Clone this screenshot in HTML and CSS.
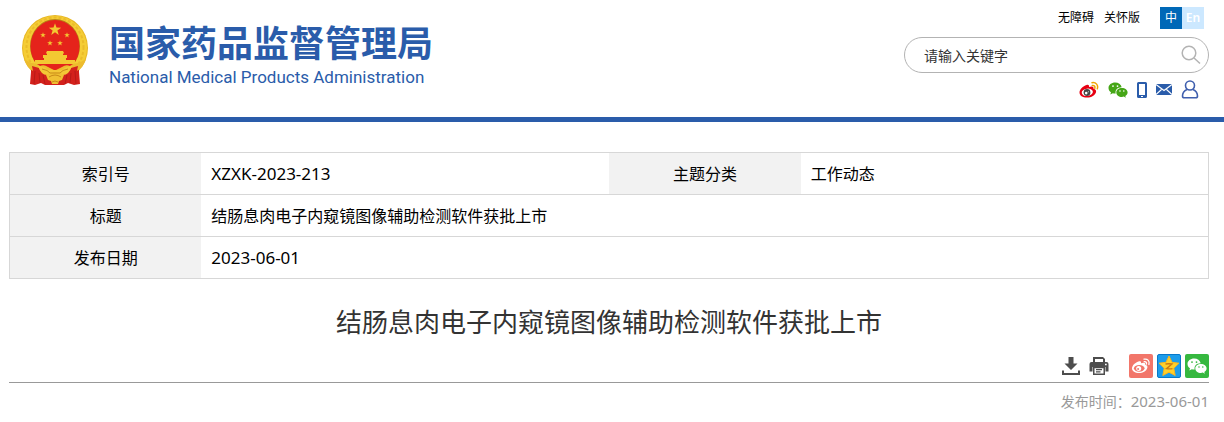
FILE: index.html
```html
<!DOCTYPE html>
<html lang="zh-CN">
<head>
    <meta charset="UTF-8">
    <meta name="viewport" content="width=device-width, initial-scale=1.0">
    <title>结肠息肉电子内窥镜图像辅助检测软件获批上市</title>
    <link rel="stylesheet" href="styles.css">
</head>
<body>
    <!-- 公用图形 -->
    <svg class="defs" aria-hidden="true">
        <symbol id="star" viewBox="0 0 20 20">
            <path d="M10 0.5l2.3 6.6 7.2.1-5.8 4.3 2.1 7-5.8-4.2-5.8 4.2 2.1-7L.5 7.2l7.2-.1z"/>
        </symbol>
        <symbol id="wechat" viewBox="0 0 20 16">
            <path fill-rule="evenodd" d="M7.200.5C3.400.5.5 2.900.5 6c0 1.800 1 3.300 2.500 4.300l-.7 2.200 2.500-1.300c.7.2 1.500.3 2.400.3h.5c-.9-3.600 2-6.400 6-6.300C13 2.400 10.400.5 7.200.5zM5 3.200a.9.9 0 110 1.800.9.9 0 010-1.800zm4.500 0a.9.9 0 110 1.800.9.9 0 010-1.800z"/>
            <path fill-rule="evenodd" d="M13.900 5.900c-3.200 0-5.600 2-5.600 4.500s2.400 4.500 5.600 4.500c.7 0 1.300-.1 1.900-.3l2 1.100-.5-1.800c1.400-.9 2.300-2.100 2.300-3.500 0-2.500-2.500-4.500-5.700-4.500zM12 8.200a.8.8 0 110 1.600.8.8 0 010-1.600zm3.800 0a.8.8 0 110 1.600.8.8 0 010-1.600z"/>
        </symbol>
    </svg>

    <header class="header">
        <div class="brand">
            <svg class="emblem" viewBox="0 0 66 71" aria-hidden="true">
                <circle cx="33" cy="33" r="33" fill="#e8b724"/>
                <circle cx="33" cy="33" r="32" fill="#f5cd36"/>
                <ellipse cx="33" cy="32" rx="28.500" ry="29.500" fill="none" stroke="#ebbc2a" stroke-width="2" stroke-dasharray="3 2"/>
                <ellipse cx="33" cy="31" rx="25" ry="27" fill="#b98316"/>
                <ellipse cx="33" cy="31.500" rx="24.500" ry="26.500" fill="#e5231b"/>
                <g fill="#f3c832">
                    <use href="#star" x="26.500" y="8" width="13" height="13"/>
                    <use href="#star" x="18" y="17" width="6" height="6"/>
                    <use href="#star" x="42" y="17" width="6" height="6"/>
                    <use href="#star" x="25" y="25" width="6" height="6"/>
                    <use href="#star" x="35" y="25" width="6" height="6"/>
                    <path d="M25 36h16l1 2-1 1v1h4v3h-1v2h9v4H13v-4h9v-2h-1v-3h4v-1l-1-1z"/>
                </g>
                <path d="M9 49l8 3q6 2 9 5h14q3-3 9-5l8-3v8l1 12-6 1-6-2-4 2H23l-4-2-6 2-5-1 1-12z" fill="#d3211c"/>
                <path d="M13 56l-1 13M17 58l1 10M21 60l2 9M53 56l1 13M49 58l-1 10M45 60l-2 9" stroke="#b81a17" fill="none"/>
                <path d="M2 44q3 9 9 12l-1-5 7 2 5 5q4 3 7-1h8q3 4 7 1l5-5 7-2-1 5q6-3 9-12l-7 4q-6 0-9 3-4-2-8 1l-6 3h-2l-6-3q-4-3-8-1-3-3-9-3z" fill="#edbc2e"/>
                <path d="M16 51q6 0 10 4h14q4-4 10-4-3 9-9 9l-4 1-4-2-4 2-4-1q-6 0-9-9z" fill="#f3c736"/>
                <path d="M24 60q9-6 18 0l-2 5-3 1-1 3h-6l-1-3-3-1z" fill="#f0c033"/>
                <path d="M20 54q6 1 8 4h10q2-3 8-4M27 62q6-4 12 0M30 67q3-2 6 0" fill="none" stroke="#c98b18"/>
            </svg>
            <div class="brand-text">
                <div class="brand-cn">国家药品监督管理局</div>
                <div class="brand-en">National Medical Products Administration</div>
            </div>
        </div>

        <div class="tools">
            <nav class="top-links">
                <a href="#">无障碍</a>
                <a href="#">关怀版</a>
                <div class="lang">
                    <a class="lang-item active" href="#">中</a>
                    <a class="lang-item" href="#">En</a>
                </div>
            </nav>

            <form class="search">
                <input class="search-input" type="text" placeholder="请输入关键字" aria-label="请输入关键字">
                <button class="search-btn" type="button" aria-label="搜索">
                    <svg width="20" height="20" viewBox="0 0 20 20" fill="none" stroke="#b3b3b3" stroke-width="1.500">
                        <circle cx="8" cy="8" r="6.800"/>
                        <path d="M13 13l6 5.500"/>
                    </svg>
                </button>
            </form>

            <nav class="media">
                <a href="#" aria-label="微博">
                    <svg width="20" height="18" viewBox="0 0 20 18">
                        <path d="M7.500 4c1.500-.6 3 0 2.500 2 2.500-1 5-.8 4.500 1.700 2 .5 3 1.800 2.500 3.500-.8 3-4.500 5.300-9 5.300S.5 14.500.5 11.500C.5 8.500 4 5 7.500 4z" fill="#e60012"/>
                        <ellipse cx="8.300" cy="11.300" rx="5.600" ry="3.700" fill="#fff" transform="rotate(-8 8.300 11.300)"/>
                        <circle cx="8" cy="11.500" r="3.400" fill="#444"/>
                        <circle cx="7.200" cy="12.100" r="1.300" fill="#fff"/>
                        <circle cx="9.300" cy="10.700" r=".5" fill="#fff"/>
                        <path d="M13 1.700c4-.7 6.500 2.500 5.300 6M13.300 4.500c2-.3 3 1 2.500 2.700" fill="none" stroke="#f0a400" stroke-width="1.500" stroke-linecap="round"/>
                    </svg>
                </a>
                <a href="#" aria-label="微信">
                    <svg width="20" height="16" fill="#45a616"><use href="#wechat"/></svg>
                </a>
                <a href="#" aria-label="移动端">
                    <svg width="10" height="16" viewBox="0 0 10 16">
                        <path fill="#2a5caa" fill-rule="evenodd" d="M1.500 0h7A1.500 1.500 0 0110 1.500v13A1.500 1.500 0 018.500 16h-7A1.500 1.500 0 010 14.500v-13A1.500 1.500 0 011.500 0zM2 2v11h6V2zm2 12v1h2v-1z"/>
                    </svg>
                </a>
                <a href="#" aria-label="邮箱">
                    <svg width="16" height="11" viewBox="0 0 16 11">
                        <rect width="16" height="11" fill="#2a5caa"/>
                        <path d="M0 .5l8 6 8-6M0 10.500l5.500-5M16 10.500l-5.500-5" fill="none" stroke="#fff" stroke-width="1.100"/>
                    </svg>
                </a>
                <a href="#" aria-label="个人中心">
                    <svg width="18" height="19" viewBox="0 0 18 19" fill="none" stroke="#3f5fae" stroke-width="1.600">
                        <circle cx="9" cy="5.500" r="4.500"/>
                        <path d="M6 9.500C3 10.800 1.500 13 1.500 16c0 1.300.6 1.800 1.700 1.800h11.600c1.100 0 1.700-.5 1.700-1.800 0-3-1.500-5.200-4.500-6.500"/>
                    </svg>
                </a>
            </nav>
        </div>
    </header>

    <main class="content">
        <table class="info">
            <tr>
                <th scope="row">索引号</th>
                <td class="num">XZXK-2023-213</td>
                <th scope="row">主题分类</th>
                <td>工作动态</td>
            </tr>
            <tr>
                <th scope="row">标题</th>
                <td colspan="3">结肠息肉电子内窥镜图像辅助检测软件获批上市</td>
            </tr>
            <tr>
                <th scope="row">发布日期</th>
                <td class="num" colspan="3">2023-06-01</td>
            </tr>
        </table>

        <h1 class="title">结肠息肉电子内窥镜图像辅助检测软件获批上市</h1>

        <div class="actions">
            <div class="action-group">
                <button class="action" type="button" aria-label="下载">
                    <svg width="20" height="20" viewBox="0 0 20 20" fill="#4d4d4d">
                        <path d="M7.500 1h5v6.500h4L10 14 3.500 7.500h4z"/>
                        <path d="M1 14.500h2V17h14v-2.500h2V19H1z"/>
                    </svg>
                </button>
                <button class="action" type="button" aria-label="打印">
                    <svg width="20" height="20" viewBox="0 0 20 20" fill="#4d4d4d">
                        <path fill-rule="evenodd" d="M4 1h10l2 2v3.500h-2V3H6v3.500H4z"/>
                        <path fill-rule="evenodd" d="M2.500 6h15a2 2 0 012 2v7.500h-3V11h-13v4.500h-3V8a2 2 0 012-2zM16 7.800v1.400h1.700V7.800z"/>
                        <path fill-rule="evenodd" d="M4 11h12v8H4zM5.500 12.300v5.200h9v-5.200z"/>
                        <path d="M7 13h6v1.200H7zM7 15.300h4.500v1.200H7z"/>
                    </svg>
                </button>
            </div>
            <div class="share">
                <a class="share-item weibo" href="#" aria-label="分享到微博">
                    <svg width="20" height="18" viewBox="0 0 20 18">
                        <path d="M7.500 4.500c1.500-.6 3 0 2.500 1.700 2.500-1 4.700-.7 4.200 1.600 2 .5 2.700 1.800 2 3.400-1 2.700-4.200 4.800-8.200 4.800S1 14.200 1 11.500s3-6 6.500-7z" fill="#fff"/>
                        <ellipse cx="8.200" cy="11.300" rx="5.300" ry="3.400" fill="#f2766a"/>
                        <circle cx="7.700" cy="11.500" r="2.500" fill="#fff"/>
                        <circle cx="7.100" cy="11.900" r="1" fill="#f2766a"/>
                        <path d="M13 2.200c3.700-.7 6 2 4.900 5.300M13.200 4.700c1.800-.3 2.700.9 2.200 2.400" fill="none" stroke="#fff" stroke-width="1.300" stroke-linecap="round"/>
                    </svg>
                </a>
                <a class="share-item qzone" href="#" aria-label="分享到QQ空间">
                    <svg width="22" height="22" viewBox="0 0 22 22">
                        <path d="M11 1l3 6.300 7 .9-5.200 5 1.400 7.300-6.200-3.300-6.200 3.300 1.400-7.300L1 8.200l7-.9z" fill="#ffd02b" stroke="#f9b61e" stroke-width="1" stroke-linejoin="round"/>
                        <path d="M7.500 9q3.500-.6 6.500 0l-5.500 4.600q3 .6 6 0" fill="none" stroke="#cf7a10" stroke-width="1.400"/>
                    </svg>
                </a>
                <a class="share-item weixin" href="#" aria-label="分享到微信">
                    <svg width="20" height="16" fill="#fff"><use href="#wechat"/></svg>
                </a>
            </div>
        </div>

        <p class="pubtime">发布时间：<span class="pubdate">2023-06-01</span></p>
    </main>
</body>
</html>
```

FILE: styles.css
```css
* {
    box-sizing: border-box;
}
body {
    margin: 0;
    background: #fff;
    color: #000;
    font-family: "Microsoft YaHei", "Noto Sans", "Noto Sans CJK SC", sans-serif;
    font-size: 16px;
}
a {
    color: inherit;
    text-decoration: none;
}
svg { display: block; }
.defs {
    position: absolute;
    width: 0;
    height: 0;
}

/* 头部 */
.header {
    display: flex;
    justify-content: space-between;
    padding: 7px 15px 18px 22px;
    border-bottom: 5px solid #2a5caa;
}
.brand {
    display: flex;
    align-items: flex-start;
    gap: 21px;
    padding-top: 8px;
    color: #2a5caa;
}
.emblem {
    width: 66px;
    height: 71px;
}
.brand-text { padding-top: 2px; }
.brand-cn {
    font-family: "Noto Sans CJK SC", sans-serif;
    font-size: 36px;
    font-weight: 700;
    line-height: 48px;
}
.brand-en {
    font-family: Roboto, "Liberation Sans", sans-serif;
    font-size: 17px;
    line-height: 24px;
}
.tools { width: 305px; }
.top-links {
    display: flex;
    justify-content: flex-end;
    align-items: center;
    gap: 10px;
    padding-right: 5px;
    font-size: 12px;
    line-height: 22px;
}
.lang {
    display: flex;
    margin-left: 10px;
}
.lang-item {
    width: 22px;
    height: 22px;
    background: #cce8ff;
    color: #fff;
    font-weight: 600;
    text-align: center;
}
.lang-item.active {
    background: #0068b7;
    font-weight: 400;
}
.search {
    display: flex;
    align-items: center;
    height: 36px;
    margin-top: 8px;
    padding: 0 7px 0 19px;
    border: 1px solid #b3b3b3;
    border-radius: 18px;
}
.search-input {
    flex: 1;
    min-width: 0;
    padding: 0;
    border: 0;
    outline: 0;
    background: none;
    font-family: inherit;
    font-size: 14px;
}
.search-input::placeholder { color: #333; }
.search-btn,
.action {
    padding: 0;
    border: 0;
    background: none;
    cursor: pointer;
}
.media {
    display: flex;
    justify-content: flex-end;
    align-items: center;
    gap: 9px;
    margin-top: 7px;
    padding-right: 10px;
}

/* 正文 */
.content { padding: 30px 15px 0 9px; }
.info {
    width: 100%;
    border: 1px solid #d7d7d7;
    border-collapse: collapse;
    table-layout: fixed;
}
.info th,
.info td {
    height: 42px;
    padding: 0 10px;
    border-bottom: 1px solid #d7d7d7;
    line-height: 24px;
}
.info th {
    width: 16%;
    background: #f2f2f2;
    font-weight: 400;
    text-align: center;
}
.info .num { font-size: 17px; }
.title {
    margin: 23px 0 12px;
    color: #333;
    font-size: 26px;
    font-weight: 400;
    line-height: 40px;
    text-align: center;
}
.actions {
    display: flex;
    justify-content: flex-end;
    align-items: center;
    gap: 20px;
    padding-bottom: 4px;
    border-bottom: 1px solid #999;
}
.action-group {
    display: flex;
    gap: 8px;
}
.share {
    display: flex;
    gap: 4px;
}
.share-item {
    display: flex;
    justify-content: center;
    align-items: center;
    width: 24px;
    height: 24px;
    border-radius: 2px;
}
.weibo { background: #f2766a; }
.qzone {
    border: 1px solid #0878c8;
    background: #1d9cea;
}
.weixin { background: #36b83f; }
.pubtime {
    margin: 7px 0 0;
    color: #999;
    font-size: 14px;
    line-height: 22px;
    text-align: right;
}
.pubdate { font-size: 15px; }
```
